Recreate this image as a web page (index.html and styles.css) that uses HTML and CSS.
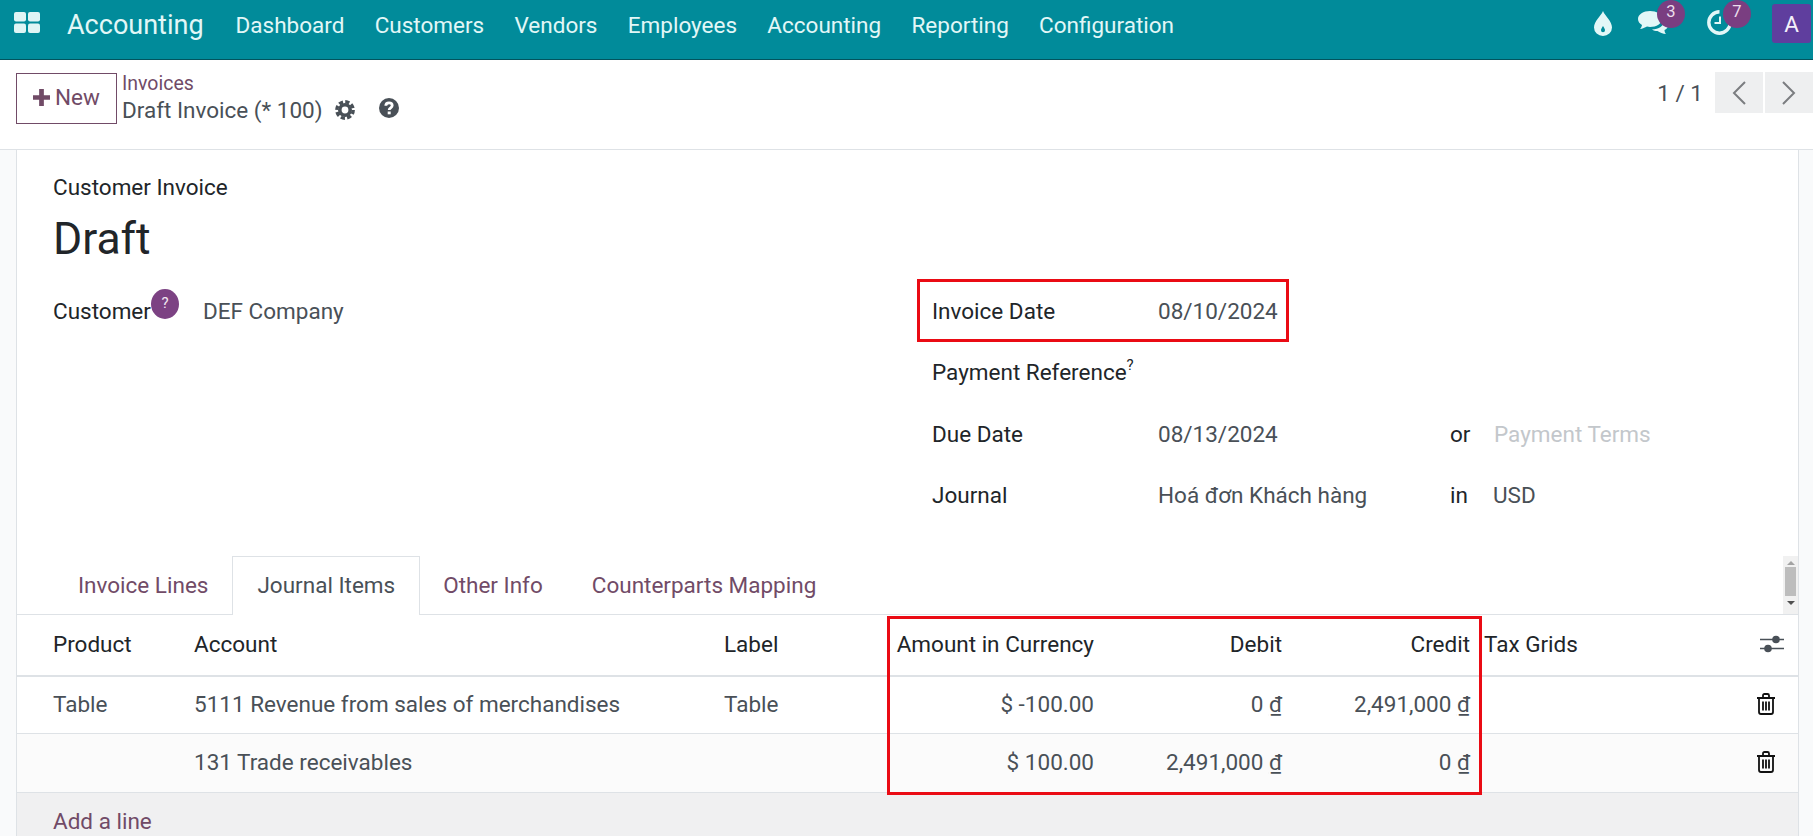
FILE: index.html
```html
<!DOCTYPE html>
<html lang="en">
<head>
<meta charset="utf-8">
<title>Draft Invoice</title>
<link rel="stylesheet" href="styles.css">
</head>
<body>
<header class="navbar">
  <svg class="apps" viewBox="0 0 26 21"><rect x="0" y="0" width="12" height="9.500" rx="2"/><rect x="14" y="0" width="12" height="9.500" rx="2"/><rect x="0" y="11.500" width="12" height="9.500" rx="2"/><rect x="14" y="11.500" width="12" height="9.500" rx="2"/></svg>
  <span class="brand">Accounting</span>
  <nav class="menu">
    <span>Dashboard</span><span>Customers</span><span>Vendors</span><span>Employees</span><span>Accounting</span><span>Reporting</span><span>Configuration</span>
  </nav>
  <div class="systray">
    <svg class="tray-drop" viewBox="0 0 18 25"><path fill-rule="evenodd" d="M9 0C11 5 18 10 18 16.500A9 8.500 0 0 1 0 16.500C0 10 7 5 9 0ZM9 15C7.800 17 7 18 7 19.300A2 2 0 0 0 11 19.300C11 18 10.200 17 9 15Z"/></svg>
    <div class="tray-item tray-chat">
      <svg viewBox="0 0 30 25"><path d="M12 1C5.500 1 0 4.500 0 9C0 11.500 1.500 13.500 4 15C3.800 16.500 3 18 2 19C4.500 18.700 7 17.700 9 16.500C10 16.700 11 17 12 17C18.500 17 24 13.500 24 9C24 4.500 18.500 1 12 1Z"/><path d="M26 11C26 16 21 19 14 19.500C15.500 20.500 17.500 21 19.500 21C21.500 22.500 25 24 28 24C27 23 26.500 21.500 26.500 20C28.500 19 30 17.500 30 15.500C30 13.500 28.500 12 26 11Z"/></svg>
      <span class="badge">3</span>
    </div>
    <div class="tray-item tray-clock">
      <svg viewBox="0 0 25 25"><path class="ring" d="M12.500 1.800A10.700 10.700 0 1 0 23.200 12.500"/><path class="hand" d="M13 6.500V13H7.500"/></svg>
      <span class="badge">7</span>
    </div>
    <span class="avatar">A</span>
  </div>
</header>

<section class="panel">
  <button class="btn-new"><svg viewBox="0 0 18 18"><path d="M6.500 0h5v6.500H18v5h-6.500V18h-5v-6.500H0v-5h6.500z"/></svg>New</button>
  <div class="crumbs">
    <span class="crumb-link">Invoices</span>
    <div class="crumb-current">
      <span>Draft Invoice (* 100)</span>
      <svg class="gear" viewBox="0 0 20 20"><circle class="gear-teeth" cx="10" cy="10" r="8.200"/><circle class="gear-ring" cx="10" cy="10" r="5.200"/></svg>
      <svg class="help" viewBox="0 0 20 20"><circle cx="10" cy="10" r="10"/><path d="M6.800 7.800C6.800 5.800 8.200 4.800 10 4.800C11.900 4.800 13.200 6 13.200 7.500C13.200 9.800 10.200 9.800 10.200 12"/><rect x="8.700" y="13.500" width="3" height="2.800"/></svg>
    </div>
  </div>
  <div class="pager">
    <span class="pager-count">1 / 1</span>
    <div class="pager-btns">
      <span class="pager-btn"><svg viewBox="0 0 14 24"><path d="M13 1 2 12l11 11"/></svg></span>
      <span class="pager-btn"><svg viewBox="0 0 14 24"><path d="m1 1 11 11L1 23"/></svg></span>
    </div>
  </div>
</section>

<main class="sheet">
  <div class="form-head">
    <div class="doc-type">Customer Invoice</div>
    <h1 class="doc-title">Draft</h1>
  </div>
  <div class="fields">
    <div class="col-left">
      <div class="field-left"><label class="lbl lbl-customer">Customer<span class="help-dot">?</span></label><span class="val">DEF Company</span></div>
    </div>
    <div class="col-right">
      <div class="field-right"><label class="lbl">Invoice Date</label><span class="val">08/10/2024</span></div>
      <div class="field-right field-tall"><label class="lbl">Payment Reference<sup>?</sup></label></div>
      <div class="field-right"><label class="lbl">Due Date</label><span class="val">08/13/2024</span><span class="lbl">or</span><span class="placeholder">Payment Terms</span></div>
      <div class="field-right"><label class="lbl">Journal</label><span class="val">Hoá đơn Khách hàng</span><span class="lbl">in</span><span class="val">USD</span></div>
    </div>
  </div>
  <div class="tabs">
    <span class="tab">Invoice Lines</span>
    <span class="tab tab-active">Journal Items</span>
    <span class="tab">Other Info</span>
    <span class="tab">Counterparts Mapping</span>
    <div class="scrollbar"><i class="arrow-up"></i><i class="thumb"></i><i class="arrow-down"></i></div>
  </div>
  <div class="grid-row head">
    <span>Product</span><span>Account</span><span>Label</span><span class="num">Amount in Currency</span><span class="num">Debit</span><span class="num">Credit</span><span class="tax">Tax Grids</span>
    <svg class="sliders" viewBox="0 0 24 18"><path d="M0 4.500H24M0 13.500H24"/><circle cx="16" cy="4.500" r="3.800"/><circle cx="8" cy="13.500" r="3.800"/></svg>
  </div>
  <div class="grid-row line">
    <span>Table</span><span>5111 Revenue from sales of merchandises</span><span>Table</span><span class="num">$ -100.00</span><span class="num">0 <u>₫</u></span><span class="num">2,491,000 <u>₫</u></span><span class="tax"></span>
    <svg class="trash" viewBox="0 0 18 22"><path d="M0 5H18M6 5V2.500Q6 1 7.500 1H10.500Q12 1 12 2.500V5M2 5V19Q2 21 4 21H14Q16 21 16 19V5M6 8.500V17.500M9 8.500V17.500M12 8.500V17.500"/></svg>
  </div>
  <div class="grid-row line alt">
    <span></span><span>131 Trade receivables</span><span></span><span class="num">$ 100.00</span><span class="num">2,491,000 <u>₫</u></span><span class="num">0 <u>₫</u></span><span class="tax"></span>
    <svg class="trash" viewBox="0 0 18 22"><path d="M0 5H18M6 5V2.500Q6 1 7.500 1H10.500Q12 1 12 2.500V5M2 5V19Q2 21 4 21H14Q16 21 16 19V5M6 8.500V17.500M9 8.500V17.500M12 8.500V17.500"/></svg>
  </div>
  <div class="add-line"><span>Add a line</span></div>
</main>

<div class="mark mark-date"></div>
<div class="mark mark-amounts"></div>
</body>
</html>
```
FILE: styles.css
```css
* { box-sizing: border-box; }
html, body { margin: 0; height: 836px; overflow: hidden; }
body {
  position: relative;
  font-family: Roboto, "Liberation Sans", sans-serif;
  font-size: 22.500px;
  color: #212529;
  background: #f9fafb;
}

/* top bar */
.navbar {
  height: 60px;
  padding-bottom: 9px;
  background: #018b9a;
  border-bottom: 1px solid #02545e;
  display: flex;
  align-items: center;
  color: #e2f7f7;
}
.apps { width: 26px; height: 21px; margin: -5px 0 0 14px; fill: #dff5f5; }
.brand { font-size: 27px; margin-left: 27px; }
.menu { display: flex; gap: 30.300px; margin-left: 32px; }
.systray { margin-left: auto; display: flex; align-items: center; height: 100%; padding-right: 2px; }
.tray-drop { width: 18px; height: 25px; fill: #e2f7f7; margin: -4px 26px 0 0; }
.tray-item { position: relative; }
.tray-item svg { display: block; }
.tray-chat { width: 30px; height: 25px; margin-right: 39px; fill: #e2f7f7; margin-top: -5px; }
.tray-chat svg { width: 30px; height: 25px; }
.tray-clock { width: 25px; height: 25px; margin-right: 40px; margin-top: -5px; }
.tray-clock svg { width: 25px; height: 25px; fill: none; stroke: #e2f7f7; }
.ring { stroke-width: 3.400; }
.hand { stroke-width: 2; }
.badge {
  position: absolute;
  width: 28px;
  height: 28px;
  top: -10px;
  left: 19px;
  border-radius: 50%;
  background: #7a3e81;
  color: #ecdfec;
  font-size: 16.500px;
  text-align: center;
  line-height: 24px;
}
.tray-clock .badge { left: 16px; }
.avatar {
  width: 39px;
  height: 39px;
  margin-top: -4px;
  border-radius: 3px;
  background: #5f3e9e;
  color: #f4f0fa;
  text-align: center;
  line-height: 41px;
  font-size: 22.500px;
}

/* control panel */
.panel {
  height: 90px;
  background: #fff;
  border-bottom: 1px solid #dee2e6;
  display: flex;
  align-items: flex-start;
  padding: 13px 0 0 16px;
}
.btn-new {
  width: 101px;
  height: 51px;
  background: #fff;
  border: 1px solid #714b67;
  color: #714b67;
  font: inherit;
  display: flex;
  align-items: center;
  justify-content: center;
  gap: 5px;
  padding: 0 0 3px;
}
.btn-new svg { width: 17px; height: 17px; fill: #714b67; }
.crumbs { margin-left: 5px; }
.crumb-link { display: block; color: #714b67; font-size: 19.500px; line-height: 21px; }
.crumb-current { display: flex; align-items: center; color: #495057; line-height: 30px; margin-top: 1px; }
.gear { width: 20px; height: 20px; margin-left: 12px; fill: none; }
.gear-teeth { stroke: #495057; stroke-width: 3.400; stroke-dasharray: 4.200 2.240; }
.gear-ring { stroke: #495057; stroke-width: 3.600; }
.help { width: 20px; height: 20px; margin: -4px 0 0 24px; }
.help circle { fill: #495057; }
.help path { fill: none; stroke: #fff; stroke-width: 2.800; }
.help rect { fill: #fff; }
.pager { margin-left: auto; display: flex; align-items: center; height: 41px; margin-top: -1px; }
.pager-count { color: #495057; margin-right: 12px; }
.pager-btns { display: flex; gap: 2px; height: 100%; }
.pager-btn { width: 48px; background: #eeeff0; display: flex; align-items: center; justify-content: center; }
.pager-btn svg { width: 14px; height: 24px; fill: none; stroke: #7b7d80; stroke-width: 2; }

/* sheet */
.sheet {
  margin-left: 16px;
  width: 1783px;
  height: 686px;
  background: #fff;
  border-left: 1px solid #dee2e6;
  border-right: 1px solid #dee2e6;
  display: flex;
  flex-direction: column;
}
.form-head { padding: 22px 0 0 36px; }
.doc-type { line-height: 30px; }
.doc-title { margin: 12px 0 0; font-size: 44.500px; font-weight: 400; line-height: 50px; }
.fields { display: flex; margin-top: 17px; height: 244px; padding-left: 36px; }
.col-left { width: 879px; }
.field-left { display: grid; grid-template-columns: 150px 1fr; height: 61px; line-height: 61px; }
.field-right { display: grid; grid-template-columns: 226px 292px 43px 1fr; height: 61px; line-height: 61px; }
.field-tall { height: 62px; }
.lbl { color: #212529; position: relative; }
.val { color: #495057; }
.placeholder { color: #c3c7cb; padding-left: 1px; }
sup { font-size: 15px; line-height: 0; vertical-align: 10px; }
.help-dot {
  position: absolute;
  top: 8px;
  left: 98px;
  width: 28px;
  height: 30px;
  border-radius: 50%;
  background: #7c4283;
  color: #f2e8f2;
  font-size: 15px;
  line-height: 28px;
  text-align: center;
}

/* tabs */
.tabs {
  position: relative;
  margin-top: 31px;
  height: 59px;
  border-bottom: 1px solid #dee2e6;
  display: flex;
  padding-left: 36px;
  flex: none;
}
.tab {
  color: #714b67;
  line-height: 57px;
  padding: 0 23px 0 24px;
  height: 59px;
  border: 1px solid transparent;
  border-bottom: 0;
}
.tab-active { color: #495057; background: #fff; border-color: #dee2e6; padding-right: 24px; }
.tab-active + .tab { padding-left: 22px; }
.scrollbar {
  position: absolute;
  right: 0;
  top: 0;
  width: 15px;
  height: 58px;
  background: #f1f1f1;
  display: flex;
  flex-direction: column;
  align-items: center;
  padding-top: 5px;
}
.arrow-up { border: 4px solid transparent; border-top: 0; border-bottom: 4px solid #a3a3a3; }
.arrow-down { border: 4px solid transparent; border-bottom: 0; border-top: 4px solid #505050; margin-top: 5px; }
.thumb { width: 11px; height: 29px; background: #bdbdbd; margin-top: 2px; }

/* table */
.grid-row {
  display: grid;
  grid-template-columns: 166px 530px 174px 214px 188px 188px 1fr 70px;
  align-items: center;
  flex: none;
  border-bottom: 1px solid #dee2e6;
  color: #495057;
  padding-bottom: 2px;
}
.grid-row > span:first-child { padding-left: 36px; }
.grid-row > span:nth-child(2), .grid-row > span:nth-child(3) { padding-left: 11px; }
.head { height: 62px; color: #212529; border-bottom-width: 2px; }
.line { height: 57px; }
.line.alt { height: 59px; background: #fbfbfb; }
.num { text-align: right; padding-right: 7px; white-space: nowrap; }
.tax { padding-left: 7px; }
.sliders { width: 24px; height: 18px; justify-self: start; margin-left: 32px; }
.sliders path { stroke: #495057; stroke-width: 1.500; fill: none; }
.sliders circle { fill: #495057; }
.trash { width: 18px; height: 22px; justify-self: start; margin-left: 29px; fill: none; stroke: #111; stroke-width: 1.800; }
.add-line { flex: 1; background: #f0f0f1; padding: 13px 0 0 36px; color: #714b67; line-height: 30px; }

/* annotation frames drawn over the screenshot */
.mark { position: absolute; border: 3px solid #ea0b14; }
.mark-date { left: 917px; top: 279px; width: 372px; height: 63px; }
.mark-amounts { left: 887px; top: 616px; width: 595px; height: 179px; }
```
